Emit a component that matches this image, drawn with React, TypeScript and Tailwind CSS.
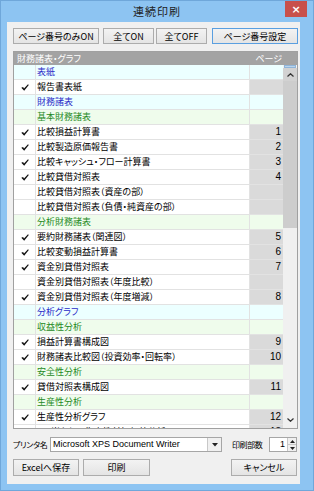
import { ReactNode } from "react";

type Row = {
  kind: "sec" | "sub" | "item";
  label: string;
  check?: boolean;
  page?: string;
};

const ROWS: Row[] = [
  { kind: "sec", label: "表紙" },
  { kind: "item", label: "報告書表紙", check: true, page: "" },
  { kind: "sec", label: "財務諸表" },
  { kind: "sub", label: "基本財務諸表" },
  { kind: "item", label: "比較損益計算書", check: true, page: "1" },
  { kind: "item", label: "比較製造原価報告書", check: true, page: "2" },
  { kind: "item", label: "比較キャッシュ・フロー計算書", check: true, page: "3" },
  { kind: "item", label: "比較貸借対照表", check: true, page: "4" },
  { kind: "item", label: "比較貸借対照表（資産の部）", page: "" },
  { kind: "item", label: "比較貸借対照表（負債・純資産の部）", page: "" },
  { kind: "sub", label: "分析財務諸表" },
  { kind: "item", label: "要約財務諸表（関連図）", check: true, page: "5" },
  { kind: "item", label: "比較変動損益計算書", check: true, page: "6" },
  { kind: "item", label: "資金別貸借対照表", check: true, page: "7" },
  { kind: "item", label: "資金別貸借対照表（年度比較）", page: "" },
  { kind: "item", label: "資金別貸借対照表（年度増減）", check: true, page: "8" },
  { kind: "sec", label: "分析グラフ" },
  { kind: "sub", label: "収益性分析" },
  { kind: "item", label: "損益計算書構成図", check: true, page: "9" },
  { kind: "item", label: "財務諸表比較図（投資効率・回転率）", check: true, page: "10" },
  { kind: "sub", label: "安全性分析" },
  { kind: "item", label: "貸借対照表構成図", check: true, page: "11" },
  { kind: "sub", label: "生産性分析" },
  { kind: "item", label: "生産性分析グラフ", check: true, page: "12" },
  { kind: "item", label: "1人当たりの生産性付加価値分析", check: true, page: "13" },
];

const CheckMark = () => (
  <svg width="8" height="7" viewBox="0 0 8 7">
    <path d="M0.3 3.7 L2.1 3 L3 4.4 L7 0.2 L7.8 0.9 L3.2 6.7 Z" fill="#111" />
  </svg>
);

function WinButton({
  children,
  className = "",
  focused = false,
}: {
  children: ReactNode;
  className?: string;
  focused?: boolean;
}) {
  return (
    <div
      className={`flex items-center justify-center border bg-linear-to-b from-[#f3f3f3] to-[#e4e4e4] text-[9px] text-black leading-none whitespace-nowrap ${
        focused ? "border-[#5a9fe0]" : "border-[#acacac]"
      } ${className}`}
    >
      {children}
    </div>
  );
}

function GridRow({ row }: { row: Row }) {
  const bg =
    row.kind === "sec" ? "bg-[#ecffff]" : row.kind === "sub" ? "bg-[#effcec]" : "bg-white";
  const color =
    row.kind === "sec" ? "text-[#2a2ac8]" : row.kind === "sub" ? "text-[#1f8a1f]" : "text-black";
  const pageBg = row.kind === "item" ? "bg-[#dadada]" : bg;

  return (
    <div className="flex h-[15px] shrink-0">
      <div className={`w-[22px] shrink-0 flex items-center justify-center border-b border-r border-[#e2e2e2] ${bg}`}>
        {row.check && <CheckMark />}
      </div>
      <div
        className={`w-[214px] shrink-0 pl-[1px] border-b border-r border-[#e2e2e2] text-[9px] leading-[14px] whitespace-nowrap overflow-hidden ${bg} ${color}`}
      >
        {row.label}
      </div>
      <div
        className={`w-[33px] shrink-0 pr-[2px] text-right border-b border-[#e2e2e2] text-[10px] leading-[14px] font-['Liberation_Sans',sans-serif] text-black ${pageBg}`}
      >
        {row.page}
      </div>
    </div>
  );
}

export default function App() {
  return (
    <div className="w-[314px] h-[491px] bg-[#8dc4f2] border border-[#6fa7da] flex flex-col font-['Noto_Sans_CJK_JP',sans-serif] [font-feature-settings:'palt'] relative overflow-hidden">
      {/* title bar */}
      <div className="h-[21px] shrink-0 flex items-center justify-center text-[11px] text-[#222] tracking-[1px]">
        連続印刷
      </div>
      <div className="absolute top-0 left-[284px] w-[22px] h-[16px] bg-[#c8504b] flex items-center justify-center text-white text-[11px] font-bold font-['DejaVu_Sans',sans-serif] leading-none">
        ×
      </div>

      {/* client area */}
      <div className="flex-1 ml-[6px] mr-[13px] mb-[6px] bg-[#f0f0f0] pt-[6px] pl-[6px] pr-[2px] flex flex-col">
        <div className="flex h-[16px]">
          <WinButton className="w-[86px]">ページ番号のみON</WinButton>
          <WinButton className="w-[51px] ml-[4px]">全てON</WinButton>
          <WinButton className="w-[51px] ml-[2px]">全てOFF</WinButton>
          <WinButton className="w-[86px] ml-[5px]" focused>
            ページ番号設定
          </WinButton>
        </div>

        {/* grid */}
        <div className="mt-[7px] h-[378px] w-[285px] border border-[#a0a0a0] flex flex-col overflow-hidden">
          <div className="h-[13px] shrink-0 bg-[#a3a3a3] flex items-center text-white text-[9px] leading-none">
            <div className="w-[238px] pl-[3px]">財務諸表・グラフ</div>
            <div className="w-[30px] text-right">ページ</div>
          </div>
          <div className="flex flex-1 overflow-hidden">
            <div className="flex flex-col w-[269px] overflow-hidden">
              {ROWS.map((r, i) => (
                <GridRow key={i} row={r} />
              ))}
            </div>
            {/* scrollbar */}
            <div className="w-[14px] flex flex-col bg-[#f0f0f0]">
              <div className="h-[3px] mx-[1px] bg-[#b9d5ee] border border-[#8fb4d8]" />
              <div className="h-[13px] bg-[#d2d2d2] flex items-center justify-center">
                <svg width="7" height="4" viewBox="0 0 7 4">
                  <path d="M0.5 3.5 L3.5 0.7 L6.5 3.5" stroke="#333" strokeWidth="1.2" fill="none" />
                </svg>
              </div>
              <div className="h-[147px] bg-[#cdcdcd]" />
              <div className="flex-1" />
              <div className="h-[16px] flex items-center justify-center">
                <svg width="7" height="4" viewBox="0 0 7 4">
                  <path d="M0.5 0.5 L3.5 3.3 L6.5 0.5" stroke="#333" strokeWidth="1.2" fill="none" />
                </svg>
              </div>
            </div>
          </div>
        </div>

        {/* printer row */}
        <div className="mt-[8px] h-[15px] flex items-center">
          <div className="w-[37px] shrink-0 text-[8px] leading-none text-black tracking-[-0.3px] whitespace-nowrap">
            プリンタ名
          </div>
          <div className="w-[172px] shrink-0 h-[15px] bg-white border border-[#a6a6a6] flex items-center">
            <div className="flex-1 pl-[2px] text-[9px] leading-none font-['Liberation_Sans',sans-serif] text-black whitespace-nowrap">
              Microsoft XPS Document Writer
            </div>
            <div className="w-[14px] h-full border-l border-[#c8c8c8] bg-[#f0f0f0] flex items-center justify-center">
              <svg width="6" height="4" viewBox="0 0 6 4">
                <path d="M0 0 H6 L3 3.5 Z" fill="#222" />
              </svg>
            </div>
          </div>
          <div className="ml-[10px] w-[37px] shrink-0 text-[8px] leading-none text-black tracking-[-0.4px] whitespace-nowrap">
            印刷部数
          </div>
          <div className="w-[28px] shrink-0 h-[15px] bg-white border border-[#a6a6a6] flex">
            <div className="flex-1 pr-[2px] text-right text-[9px] leading-[13px] font-['Liberation_Sans',sans-serif] text-black">
              1
            </div>
            <div className="w-[9px] flex flex-col border-l border-[#c8c8c8] bg-[#f0f0f0]">
              <div className="flex-1 flex items-center justify-center border-b border-[#c8c8c8]">
                <svg width="5" height="3" viewBox="0 0 5 3">
                  <path d="M0 3 H5 L2.5 0 Z" fill="#222" />
                </svg>
              </div>
              <div className="flex-1 flex items-center justify-center">
                <svg width="5" height="3" viewBox="0 0 5 3">
                  <path d="M0 0 H5 L2.5 3 Z" fill="#222" />
                </svg>
              </div>
            </div>
          </div>
        </div>

        {/* bottom buttons */}
        <div className="mt-[7px] h-[17px] flex">
          <WinButton className="w-[66px]">Excelへ保存</WinButton>
          <WinButton className="w-[67px] ml-[4px]">印刷</WinButton>
          <div className="flex-1" />
          <WinButton className="w-[66px] mr-[1px]">キャンセル</WinButton>
        </div>
      </div>
    </div>
  );
}
